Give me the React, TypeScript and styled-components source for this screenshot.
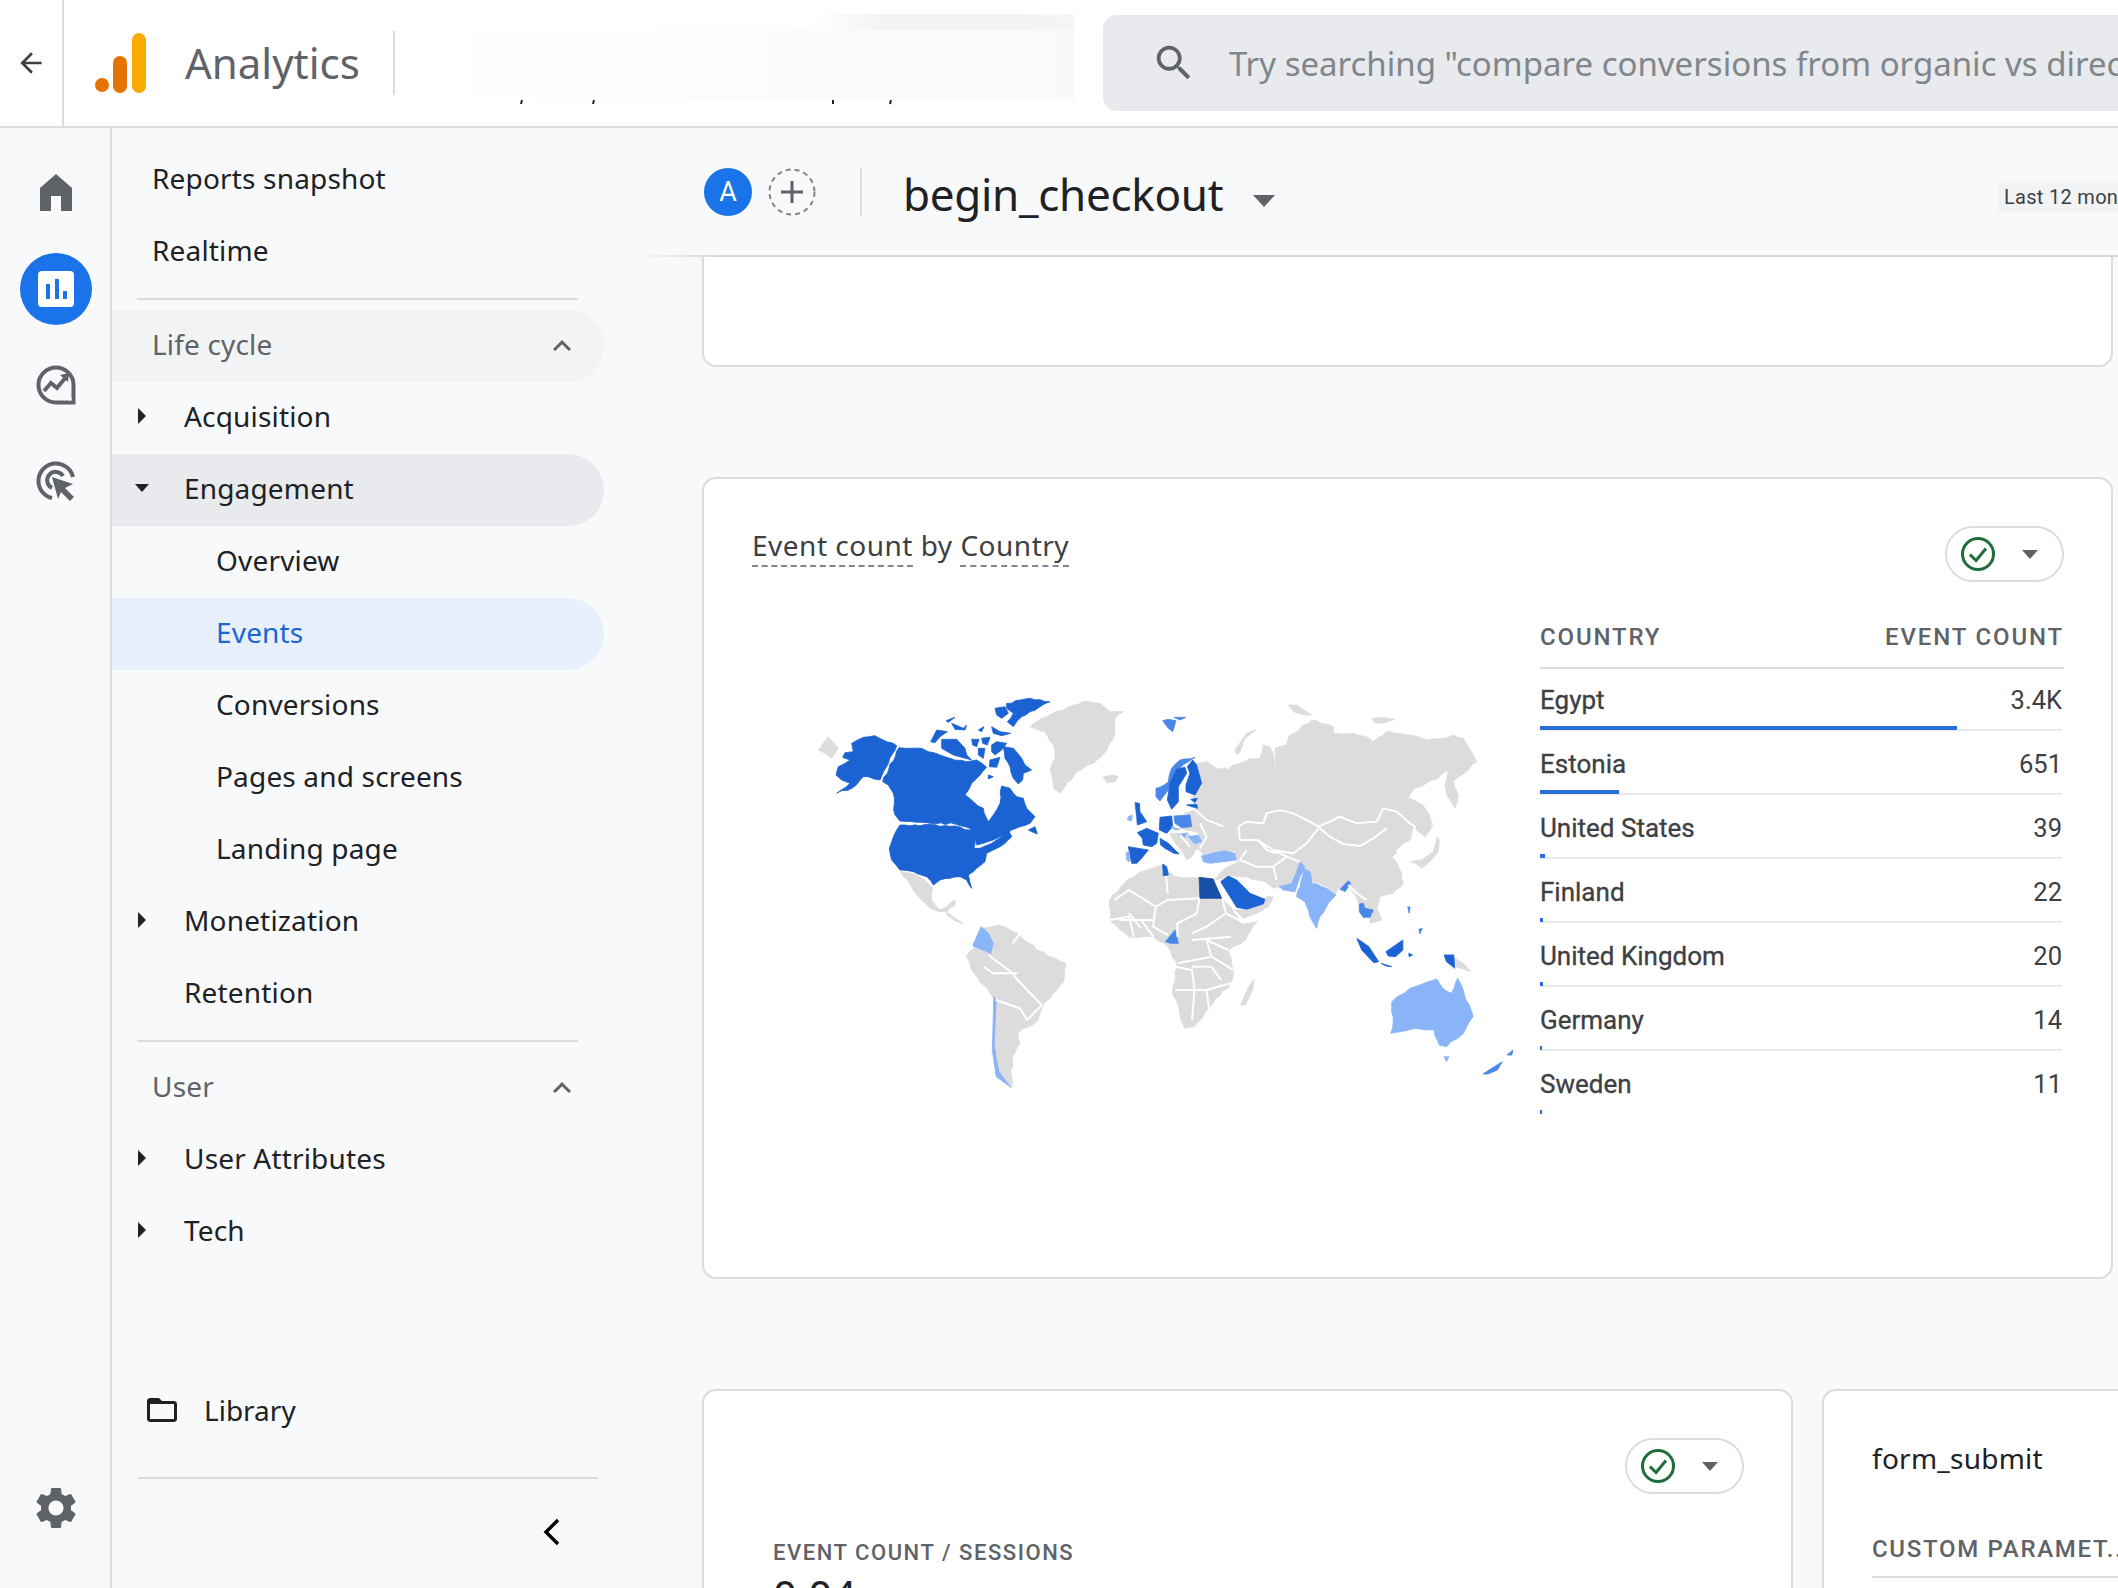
import React from 'react';
import styled, {createGlobalStyle} from 'styled-components';

const GlobalStyle = createGlobalStyle`
    html, body {
        margin: 0;
        padding: 0;
        background: #f8f9fb;
    }
    * {
        box-sizing: border-box;
    }
`

const SANS = `"Noto Sans", "Open Sans", sans-serif`
const ROBOTO = `Roboto, "Liberation Sans", sans-serif`

const Page = styled.div`
    width: 2118px;
    height: 1588px;
    overflow: hidden;
    display: flex;
    flex-direction: column;
    font-family: ${SANS};
    background: #f8f9fb;
`

/* top bar */
const TopBar = styled.header`
    height: 128px;
    flex-shrink: 0;
    display: flex;
    align-items: stretch;
    background: #fff;
    border-bottom: 2px solid #dadce0;
`
const BackCell = styled.div`
    width: 64px;
    display: flex;
    align-items: center;
    justify-content: center;
    border-right: 2px solid #dadce0;
`
const Brand = styled.div`
    display: flex;
    align-items: center;
    margin-left: 31px;
`
const BrandName = styled.span`
    margin: -2px 0 0 39px;
    font-size: 42px;
    color: #5f6368;
`
const BrandRule = styled.div`
    width: 2px;
    height: 64px;
    margin-left: 33px;
    background: #dadce0;
`
const Redacted = styled.div`
    position: relative;
    width: 662px;
    height: 86px;
    margin: 14px 0 0 17px;
    background:
        linear-gradient(90deg, #ffffff 60%, #f3f3f3 72%, #f5f5f5) top / 100% 16px no-repeat,
        linear-gradient(90deg, #ffffff, #fcfcfc 50%, #f9f9f9);
`
const Descenders = styled.svg`
    position: absolute;
    left: 0;
    top: 86px;
`
const SearchBar = styled.div`
    flex: 1;
    height: 96px;
    margin: 15px -30px 0 29px;
    padding-left: 48px;
    display: flex;
    align-items: center;
    border-radius: 14px;
    background: #e8eaed;
    overflow: hidden;
`
const SearchIcon = styled.svg`
    flex-shrink: 0;
`
const SearchText = styled.span`
    margin-left: 32px;
    font-size: 33px;
    color: #80868b;
    white-space: nowrap;
`

/* left rail */
const Body = styled.div`
    flex: 1;
    display: flex;
    min-height: 0;
`
const Rail = styled.nav`
    width: 112px;
    flex-shrink: 0;
    display: flex;
    flex-direction: column;
    align-items: center;
    padding-top: 29px;
    border-right: 2px solid #dadce0;
`
const RailSlot = styled.div`
    width: 72px;
    height: 72px;
    margin-bottom: 24px;
    margin-left: 1px;
    display: flex;
    align-items: center;
    justify-content: center;
`
const RailActive = styled(RailSlot)`
    border-radius: 50%;
    background: #1a73e8;
`
const RailBottom = styled(RailSlot)`
    margin-top: auto;
    margin-bottom: 44px;
`

/* navigation panel */
const NavPanel = styled.aside`
    width: 492px;
    flex-shrink: 0;
    display: flex;
    flex-direction: column;
    padding-top: 16px;
`
type Tone = 'plain' | 'section' | 'muted' | 'open' | 'active'
const toneBg: Record<Tone, string> = {
    plain: 'transparent',
    section: '#f1f3f4',
    muted: 'transparent',
    open: '#e8eaed',
    active: '#e8f0fe',
}
const toneText: Record<Tone, string> = {
    plain: '#202124',
    section: '#5f6368',
    muted: '#5f6368',
    open: '#202124',
    active: '#1967d2',
}
const NavRow = styled.div<{ $tone: Tone }>`
    height: 72px;
    flex-shrink: 0;
    display: flex;
    align-items: center;
    padding: 0 26px 4px 20px;
    border-radius: 0 36px 36px 0;
    font-size: 28px;
    letter-spacing: 0.17px;
    background: ${props => toneBg[props.$tone]};
    color: ${props => toneText[props.$tone]};
`
const CaretSlot = styled.div`
    width: 20px;
    display: flex;
    justify-content: center;
`
const NavLabel = styled.span<{ $depth: number }>`
    margin-left: ${props => props.$depth * 32}px;
`
const SectionChevron = styled.svg`
    margin: 4px -2px 0 auto;
`
const NavRule = styled.div<{ $top: number }>`
    height: 2px;
    flex-shrink: 0;
    margin: ${props => props.$top}px 26px 10px 25px;
    background: #dadce0;
`
const LibraryRow = styled.div`
    height: 72px;
    flex-shrink: 0;
    margin-top: 108px;
    padding: 0 0 4px 32px;
    display: flex;
    align-items: center;
    gap: 24px;
    font-size: 28px;
    color: #202124;
`
const FootRule = styled.div`
    height: 2px;
    margin: 29px 6px 0 26px;
    background: #dadce0;
`
const CollapseRow = styled.div`
    height: 106px;
    display: flex;
    align-items: center;
    justify-content: flex-end;
    padding-right: 44px;
`

/* main */
const Main = styled.main`
    flex: 1;
    min-width: 0;
    display: flex;
    flex-direction: column;
`
const ReportHeader = styled.div`
    height: 129px;
    flex-shrink: 0;
    margin-left: 30px;
    padding: 0 0 0 70px;
    display: flex;
    align-items: center;
    border-bottom: 2px solid #d4d6d9;
    border-image: linear-gradient(90deg, transparent, #d4d6d9 90px) 1;
`
const Avatar = styled.div`
    width: 48px;
    height: 48px;
    border-radius: 50%;
    display: flex;
    align-items: center;
    justify-content: center;
    background: #1a73e8;
    color: #fff;
    font: 400 27px ${ROBOTO};
`
const AddCompare = styled.svg`
    margin-left: 16px;
`
const HeaderRule = styled.div`
    width: 2px;
    height: 48px;
    margin-left: 44px;
    background: #dadce0;
`
const ReportTitle = styled.h1`
    margin: 4px 0 0 41px;
    font-size: 44px;
    font-weight: 400;
    letter-spacing: -0.3px;
    color: #202124;
`
const TitleCaret = styled.svg`
    margin: 18px 0 0 29px;
`
const DateChip = styled.div`
    width: 121px;
    height: 31px;
    margin: 10px 0 0 auto;
    padding-left: 7px;
    display: flex;
    align-items: center;
    overflow: hidden;
    white-space: nowrap;
    border-radius: 4px 0 0 4px;
    background: #f1f3f4;
    color: #3c4043;
    font: 400 20px ${ROBOTO};
    letter-spacing: 0.3px;
`
const Content = styled.div`
    flex: 1;
    padding: 0 5px 0 98px;
    display: flex;
    flex-direction: column;
    gap: 110px;
`
const Card = styled.section`
    background: #fff;
    border: 2px solid #dadce0;
    border-radius: 14px;
`
const StubCard = styled(Card)`
    height: 110px;
    border-top: none;
    border-radius: 0 0 14px 14px;
`
const MapCard = styled(Card)`
    height: 802px;
    flex-shrink: 0;
`
const MapHead = styled.div`
    display: flex;
    justify-content: space-between;
    align-items: flex-start;
    padding: 47px 47px 0 48px;
`
const MapTitle = styled.div`
    margin-top: -1px;
    font-size: 28px;
    line-height: 40px;
    letter-spacing: 0.5px;
    color: #3c4043;
`
const Dashed = styled.span`
    padding-bottom: 1px;
    border-bottom: 2px dashed #80868b;
`
const StatusPill = styled.div`
    width: 119px;
    height: 56px;
    display: flex;
    align-items: center;
    padding-left: 13px;
    gap: 24px;
    border: 2px solid #dadce0;
    border-radius: 28px;
    background: #fff;
`
const MapBody = styled.div`
    display: flex;
    margin-top: 18px;
    margin-left: 76px;
`
const WorldMap = styled.svg`
    flex-shrink: 0;
    margin-top: 80px;
`
const Table = styled.div`
    width: 524px;
    font-family: ${ROBOTO};
`
const TableHead = styled.div`
    height: 69px;
    padding: 23px 0 0;
    display: flex;
    justify-content: space-between;
    border-bottom: 2px solid #dadce0;
    font-size: 24px;
    font-weight: 500;
    line-height: 28px;
    letter-spacing: 1.85px;
    color: #5f6368;
`
const Row = styled.div`
    height: 64px;
    display: flex;
    flex-direction: column;
`
const RowText = styled.div`
    height: 57px;
    padding: 16px 2px 0 0;
    display: flex;
    justify-content: space-between;
    font-size: 25.5px;
    line-height: 30px;
    color: #3c4043;
`
const RowName = styled.span`
    font-size: 26px;
    -webkit-text-stroke: 0.3px #3c4043;
`
const Track = styled.div<{ $line: boolean }>`
    height: 5px;
    margin-right: 2px;
    border-bottom: 2px solid ${props => (props.$line ? '#e8eaed' : 'transparent')};
`
const Fill = styled.div`
    height: 4px;
    background: #2a6fd9;
`
const BottomRow = styled.div`
    display: flex;
    gap: 29px;
`
const RatioCard = styled(Card)`
    width: 1091px;
    height: 320px;
    flex-shrink: 0;
    padding: 47px 47px 0 69px;
`
const PillLine = styled.div`
    display: flex;
    justify-content: flex-end;
`
const RatioLabel = styled.div`
    margin-top: 46px;
    font: 500 22px/26px ${ROBOTO};
    letter-spacing: 1.55px;
    color: #5f6368;
`
const RatioValue = styled.div`
    margin-top: 4px;
    font-size: 42px;
    line-height: 50px;
    color: #202124;
`
const ParamCard = styled(Card)`
    width: 400px;
    height: 320px;
    flex-shrink: 0;
    padding: 47px 0 0 48px;
`
const ParamTitle = styled.div`
    font-size: 28px;
    line-height: 40px;
    letter-spacing: 0.25px;
    color: #202124;
`
const ParamHead = styled.div`
    height: 59px;
    margin-top: 41px;
    padding-top: 16px;
    white-space: nowrap;
    border-bottom: 2px solid #dadce0;
    font: 500 24px/28px ${ROBOTO};
    letter-spacing: 1.7px;
    color: #5f6368;
`

/* icons */
const Tri = ({dir, size, color}: { dir: 'right' | 'down', size: number, color: string }) => (
    <svg width={size} height={size} viewBox="0 0 20 20">
        <polygon points={dir === 'down' ? '3,6 17,6 10,14' : '6,2 14,10 6,18'} fill={color}/>
    </svg>
)

const CheckIcon = () => (
    <svg width="36" height="36" viewBox="0 0 36 36">
        <circle cx="18" cy="18" r="15.5" fill="none" stroke="#1e6e3c" strokeWidth="3"/>
        <polyline points="10,18.5 16,24.5 26,12.5" fill="none" stroke="#1e6e3c" strokeWidth="3"/>
    </svg>
)

const PillCaret = () => (
    <svg width="20" height="20" viewBox="0 0 20 20">
        <polygon points="2,6 18,6 10,15" fill="#5f6368"/>
    </svg>
)

const GaLogo = () => (
    <svg width="51" height="60" viewBox="0 0 51 60">
        <rect x="37" y="0" width="14" height="60" rx="7" fill="#f9ab00"/>
        <rect x="18" y="23" width="14" height="37" rx="7" fill="#e37400"/>
        <circle cx="7" cy="52" r="7" fill="#e37400"/>
    </svg>
)

const ReportsIcon = () => (
    <svg width="36" height="36" viewBox="0 0 36 36">
        <rect width="36" height="36" rx="4" fill="#fff"/>
        <rect x="8" y="13" width="4" height="15" fill="#1a73e8"/>
        <rect x="17" y="8" width="4" height="20" fill="#1a73e8"/>
        <rect x="25" y="20" width="4" height="8" fill="#1a73e8"/>
    </svg>
)

const navTop = [
    {label: 'Reports snapshot'},
    {label: 'Realtime'},
]
type NavItem = { label: string, depth: number, caret?: 'right' | 'down', tone?: Tone }
const lifeCycle: NavItem[] = [
    {label: 'Acquisition', depth: 1, caret: 'right'},
    {label: 'Engagement', depth: 1, caret: 'down', tone: 'open'},
    {label: 'Overview', depth: 2},
    {label: 'Events', depth: 2, tone: 'active'},
    {label: 'Conversions', depth: 2},
    {label: 'Pages and screens', depth: 2},
    {label: 'Landing page', depth: 2},
    {label: 'Monetization', depth: 1, caret: 'right'},
    {label: 'Retention', depth: 1},
]
const userItems: NavItem[] = [
    {label: 'User Attributes', depth: 1, caret: 'right'},
    {label: 'Tech', depth: 1, caret: 'right'},
]

const NavEntry = ({item}: { item: NavItem }) => (
    <NavRow $tone={item.tone || 'plain'}>
        <CaretSlot>{item.caret && <Tri dir={item.caret} size={20} color="#202124"/>}</CaretSlot>
        <NavLabel $depth={item.depth}>{item.label}</NavLabel>
    </NavRow>
)

const SectionHead = ({label}: { label: string }) => (
    <>
        <CaretSlot/>
        <NavLabel $depth={0}>{label}</NavLabel>
        <SectionChevron width="36" height="36" viewBox="0 0 24 24">
            <path d="M7.41 15.41 12 10.83l4.59 4.58L18 14l-6-6-6 6z" fill="#5f6368"/>
        </SectionChevron>
    </>
)

const countries = [
    {name: 'Egypt', value: '3.4K', bar: 417},
    {name: 'Estonia', value: '651', bar: 79},
    {name: 'United States', value: '39', bar: 5},
    {name: 'Finland', value: '22', bar: 3},
    {name: 'United Kingdom', value: '20', bar: 3},
    {name: 'Germany', value: '14', bar: 2},
    {name: 'Sweden', value: '11', bar: 2},
]

const GREY = '#dcdcdc'
const BLUE = '#1b62d2'
const DARK = '#174ea6'
const MID = '#4a86e8'
const LIGHT = '#8ab4f8'

// traced from crops of the map, each group in the coordinates of its crop
const americas: [string, string][] = [
    [GREY, '55,210 85,170 115,205 95,235 75,220'],
    [BLUE, '155,190 190,172 225,167 250,180 290,197 240,300 205,290 190,290 160,322 110,340 150,310 125,300 108,285 115,260 150,240 128,232 135,218 160,215'],
    [BLUE, '297,203 330,205 365,205 385,215 420,225 450,235 500,245 530,240 560,262 540,285 515,310 495,345 520,365 550,385 565,425 580,405 600,370 605,318 630,325 650,350 670,355 680,385 705,410 690,430 660,440 635,450 610,465 580,480 550,490 530,495 525,470 510,445 465,432 380,428 300,423 285,405 280,340 265,315 248,305'],
    [BLUE, '620,70 690,55 750,65 720,80 690,95 665,110 640,140 622,125 640,100 620,85'],
    [BLUE, '585,85 615,80 625,100 605,115 590,105'],
    [BLUE, '392,185 410,150 442,155 420,170 405,188'],
    [BLUE, '425,178 470,178 495,205 500,225 515,240 460,225 425,205'],
    [BLUE, '438,122 465,112 445,127'],
    [BLUE, '455,130 490,145 500,135 495,150 465,148'],
    [BLUE, '515,178 537,178 530,200 518,195'],
    [BLUE, '545,175 570,172 562,195 548,190'],
    [BLUE, '575,195 590,185 620,190 605,210 585,225 575,215'],
    [BLUE, '610,200 640,205 665,235 675,255 695,270 670,280 668,300 655,312 640,295 630,260 615,235'],
    [BLUE, '575,140 600,155 632,160 605,167 580,160'],
    [BLUE, '570,240 600,232 590,262 568,260'],
    [BLUE, '535,150 552,140 545,155'],
    [BLUE, '535,205 555,205 550,235 535,225'],
    [BLUE, '565,285 580,290 565,297'],
    [BLUE, '300,435 465,438 510,450 525,470 522,505 540,505 575,490 605,470 625,450 635,470 625,480 600,500 580,510 560,520 555,545 530,565 505,585 515,625 500,600 480,590 450,595 420,600 400,615 380,590 340,575 300,570 275,540 268,505 280,470 290,450'],
    [BLUE, '685,450 705,440 712,462 695,455'],
    [GREY, '300,575 340,580 375,600 398,625 395,660 420,690 440,680 465,660 465,675 440,695 420,695 390,685 360,655 335,620'],
    [GREY, '440,695 465,715 490,730 470,725 440,705'],
    [GREY, '690,140 740,110 790,90 850,65 900,70 930,95 970,95 945,115 945,160 920,210 880,250 830,275 795,320 780,340 760,325 750,270 765,235 760,195 735,155'],
    [GREY, '910,290 940,285 955,290 945,305 920,308'],
]

const eurasia: [string, string][] = [
    [GREY, '290,250 320,245 355,268 375,262 380,270 400,255 450,235 480,235 490,195 510,200 530,265 525,205 560,195 570,165 635,120 700,140 700,160 760,160 800,170 820,185 860,155 930,165 980,180 1030,175 1060,165 1090,175 1115,215 1130,245 1085,285 1060,305 1075,345 1065,385 1040,345 1035,315 1045,270 1020,290 980,310 945,325 925,355 965,375 985,400 995,440 975,470 940,440 935,475 900,500 870,525 885,540 905,580 910,610 880,640 840,650 830,685 845,720 810,730 810,712 780,690 775,665 760,640 745,615 715,625 708,640 680,620 635,605 630,575 610,560 600,545 590,575 575,610 535,620 520,625 495,605 470,600 440,590 410,590 385,585 370,595 345,600 360,580 375,565 415,545 405,515 375,510 340,515 310,525 300,510 275,505 265,495 305,485 295,460 240,445 275,440 270,405 250,400 285,390 295,372 278,350 305,320 305,310'],
    [GREY, '210,460 265,460 295,495 275,530 260,540 245,510 225,490'],
    [GREY, '405,690 440,690 490,675 500,650 520,650 505,680 470,700 430,715'],
    [GREY, '405,210 440,160 470,148 435,175 420,215 410,225'],
    [GREY, '565,75 590,75 635,105 610,105 580,95'],
    [GREY, '815,115 850,112 885,118 850,130 825,128'],
    [GREY, '930,545 965,540 1000,515 1012,470 1018,480 1015,515 990,545 965,565 945,550'],
    [GREY, '965,370 985,400 1000,440 990,420 970,390'],
    [GREY, '865,510 885,500 890,520 875,530'],
    [MID, '188,122 205,118 228,122 218,155 205,145'],
    [MID, '222,112 258,112 240,120'],
    [MID, '168,325 205,305 215,265 240,240 285,232 265,245 240,265 225,290 205,330 180,363 168,350'],
    [BLUE, '230,268 255,262 260,280 235,320 235,365 215,388 202,360 210,310'],
    [BLUE, '262,260 278,240 290,255 305,310 285,345 258,335 258,315 270,280'],
    [BLUE, '272,358 292,355 285,368'],
    [BLUE, '260,375 290,372 293,385 275,380'],
    [BLUE, '105,368 118,370 120,395 140,425 112,435 110,410'],
    [LIGHT, '85,410 97,405 95,422 82,420'],
    [BLUE, '112,458 140,445 175,460 170,490 155,500 130,495 127,475'],
    [BLUE, '180,412 215,408 218,440 200,460 178,450'],
    [MID, '222,408 270,405 275,440 245,443 225,430'],
    [BLUE, '85,500 145,510 125,535 110,550 95,550'],
    [LIGHT, '78,518 88,515 88,545 80,540'],
    [BLUE, '180,475 205,490 237,522 222,520 195,505 182,495'],
    [LIGHT, '265,470 295,465 305,485 285,492'],
    [LIGHT, '212,440 240,448 225,450'],
    [LIGHT, '235,465 262,458 255,472'],
    [BLUE, '188,552 200,560 205,585 190,587'],
    [LIGHT, '305,528 340,518 375,512 405,520 410,540 370,545 330,550 310,545'],
    [DARK, '297,592 340,597 345,610 365,655 300,655'],
    [BLUE, '362,605 385,588 410,600 450,640 495,658 490,672 440,688 410,682 390,650'],
    [LIGHT, '537,620 575,610 590,575 600,545 615,560 600,590 590,620 585,635 550,630'],
    [LIGHT, '610,565 630,575 635,610 680,625 708,645 680,680 660,710 650,745 635,720 615,665 590,650 600,620'],
    [MID, '720,628 745,602 752,610 735,635 730,632'],
    [MID, '778,672 790,670 795,685 820,690 810,712 790,712 778,695'],
]

const eurasiaLines = [
    '415,440 440,425 490,430 500,400 540,390 580,400 620,420 655,440',
    '655,440 690,425 720,410 770,430 830,425 850,385 890,395 930,430 945,440 935,475',
    '655,440 690,470 730,492 780,498 820,475 860,445',
    '415,440 420,480 470,480 520,510 580,520 620,490 655,445',
    '475,480 500,510 530,520',
    '520,510 560,530 520,560 530,600',
    '560,530 600,545',
    '285,390 320,420 370,440',
    '300,430 320,470 300,505',
    '745,615 770,640 800,660',
    '440,510 420,540 470,560 520,560',
    '240,465 270,500',
]

const southern: [string, string][] = [
    [GREY, '740,578 790,555 815,590 865,595 865,655 912,655 935,695 950,730 985,725 960,780 925,810 935,870 930,910 885,985 855,1040 835,1045 825,1000 810,930 820,860 800,800 770,770 720,770 680,720 680,660 710,610'],
    [MID, '795,785 815,750 822,790 805,790'],
    [GREY, '950,975 965,925 978,898 975,930 960,975'],
    [GREY, '415,745 450,735 490,760 530,810 590,850 585,905 545,970 530,1025 490,1060 495,1090 480,1130 478,1190 478,1225 450,1190 440,1100 445,960 400,880 385,830 400,805 435,820'],
    [LIGHT, '398,795 415,740 430,760 440,790 435,820 400,800'],
    [LIGHT, '441,950 446,960 442,1090 446,1135 452,1175 476,1222 470,1215 446,1190 438,1110'],
    [LIGHT, '1262,965 1300,925 1320,915 1355,897 1365,920 1385,940 1398,895 1415,960 1430,1010 1410,1060 1375,1100 1360,1095 1350,1050 1310,1045 1260,1060 1265,1010'],
    [LIGHT, '1370,1130 1380,1130 1375,1145'],
    [MID, '1450,1182 1490,1145 1480,1170 1460,1182'],
    [MID, '1500,1125 1512,1110 1510,1125'],
    [BLUE, '1190,775 1215,800 1235,845 1225,848 1200,810'],
    [BLUE, '1250,815 1270,795 1285,780 1285,810 1270,830 1255,828'],
    [BLUE, '1240,850 1262,860 1250,858'],
    [GREY, '1392,835 1410,850 1425,875 1395,860'],
    [BLUE, '1370,825 1390,825 1392,865 1375,845'],
    [BLUE, '1297,820 1305,825 1298,830'],
    [MID, '1295,680 1300,682 1298,700'],
    [MID, '1318,748 1325,745 1320,762'],
]

const southernLines = [
    '690,660 720,630 775,680 800,660 865,655',
    '795,570 800,640',
    '865,655 860,700 820,730 820,770',
    '775,680 770,740 800,765',
    '700,720 770,720',
    '912,655 920,700 880,740 850,760',
    '850,780 930,770',
    '880,780 890,830 820,850',
    '890,830 935,870',
    '815,930 880,930 885,985',
    '855,930 850,1020',
    '880,930 930,910',
    '680,720 720,710 730,770',
    '720,700 745,745',
    '745,720 770,770',
    '920,700 960,730',
    '925,810 880,780',
    '850,860 890,860',
    '815,860 850,870 855,930',
    '890,860 910,900',
    '430,825 480,880 490,900 540,975 510,1020',
    '445,960 495,985 510,1020',
    '490,880 440,880 420,860',
    '480,790 495,760',
]

// the traced outlines are coarse, so break long edges up a little to get a coastline
const roughen = (points: string) => {
    const pts = points.split(' ').map(p => p.split(',').map(Number))
    if (pts.length < 10) return points
    const out: string[] = []
    pts.forEach(([x, y], i) => {
        const [nx, ny] = pts[(i + 1) % pts.length]
        const len = Math.hypot(nx - x, ny - y)
        const steps = Math.floor(len / 14)
        out.push(`${x},${y}`)
        for (let s = 1; s < steps; s++) {
            const seed = Math.sin((x + s) * 12.9898 + (y + s) * 78.233) * 43758.5453
            const off = (seed - Math.floor(seed) - 0.5) * 6
            const t = s / steps
            out.push(`${x + (nx - x) * t - (ny - y) / len * off},${y + (ny - y) * t + (nx - x) / len * off}`)
        }
    })
    return out.join(' ')
}

const Shapes = ({shapes}: { shapes: [string, string][] }) => (
    <>
        {shapes.map(([fill, points], i) => (
            <polygon key={i} fill={fill} points={roughen(points)} stroke={fill} strokeWidth="0.8"
                     strokeLinejoin="round" vectorEffect="non-scaling-stroke"/>
        ))}
    </>
)

const Borders = ({lines}: { lines: string[] }) => (
    <>
        {lines.map((points, i) => (
            <polyline key={i} points={points} fill="none" stroke="#fff" strokeWidth="2" vectorEffect="non-scaling-stroke"/>
        ))}
    </>
)

const App = () => {
    return (
        <Page>
            <GlobalStyle/>
            <TopBar>
                <BackCell>
                    <svg width="32" height="32" viewBox="0 0 24 24">
                        <path d="M20 11H7.83l5.59-5.59L12 4l-8 8 8 8 1.41-1.41L7.83 13H20v-2z" fill="#3c4043"/>
                    </svg>
                </BackCell>
                <Brand>
                    <GaLogo/>
                    <BrandName>Analytics</BrandName>
                    <BrandRule/>
                </Brand>
                <Redacted>
                    <Descenders width="662" height="6" viewBox="0 0 662 6">
                        <path d="M110 0l-1 4M182 0l-1 4M421 0v4M479 0l-1 4" stroke="#202124" strokeWidth="2"/>
                    </Descenders>
                </Redacted>
                <SearchBar>
                    <SearchIcon width="46" height="46" viewBox="0 0 24 24">
                        <path d="M15.5 14h-.79l-.28-.27C15.41 12.59 16 11.11 16 9.5 16 5.91 13.09 3 9.5 3S3 5.91 3 9.5 5.91 16 9.5 16c1.61 0 3.09-.59 4.23-1.57l.27.28v.79l5 4.99L20.49 19l-4.99-5zm-6 0C7.01 14 5 11.99 5 9.5S7.01 5 9.5 5 14 7.01 14 9.5 11.99 14 9.5 14z" fill="#5f6368"/>
                    </SearchIcon>
                    <SearchText>Try searching "compare conversions from organic vs direct"</SearchText>
                </SearchBar>
            </TopBar>
            <Body>
                <Rail>
                    <RailSlot>
                        <svg width="40" height="44" viewBox="0 0 20 22">
                            <path d="M10 1.5L18 8.5V20H12.5V12.5H7.5V20H2V8.5Z" fill="#5f6368"/>
                        </svg>
                    </RailSlot>
                    <RailActive><ReportsIcon/></RailActive>
                    <RailSlot>
                        <svg width="42" height="42" viewBox="0 0 42 42">
                            <path d="M21 3.5A17.5 17.5 0 1 0 21 38.5H38.5V21A17.5 17.5 0 0 0 21 3.5Z" fill="none" stroke="#5f6368" strokeWidth="4"/>
                            <polyline points="9,27 16,19 22,24 31,13" fill="none" stroke="#5f6368" strokeWidth="4"/>
                            <polygon points="25,11 34,9 33,18" fill="#5f6368"/>
                            <circle cx="35" cy="35" r="1.8" fill="#f8f9fb"/>
                        </svg>
                    </RailSlot>
                    <RailSlot>
                        <svg width="42" height="42" viewBox="0 0 42 42">
                            <path d="M17 38A17.5 17.5 0 1 1 38 17" fill="none" stroke="#5f6368" strokeWidth="4"/>
                            <path d="M17 28A8.5 8.5 0 1 1 28 16" fill="none" stroke="#5f6368" strokeWidth="4"/>
                            <polygon points="17,17 38,24 30,28 39,37 35,41 26,32 23,39" fill="#5f6368"/>
                        </svg>
                    </RailSlot>
                    <RailBottom>
                        <svg width="50" height="50" viewBox="0 0 24 24">
                            <path d="M19.14 12.94c.04-.3.06-.61.06-.94 0-.32-.02-.64-.07-.94l2.03-1.58c.18-.14.23-.41.12-.61l-1.92-3.32c-.12-.22-.37-.29-.59-.22l-2.39.96c-.5-.38-1.03-.7-1.62-.94l-.36-2.54c-.04-.24-.24-.41-.48-.41h-3.84c-.24 0-.43.17-.47.41l-.36 2.54c-.59.24-1.13.57-1.62.94l-2.39-.96c-.22-.08-.47 0-.59.22L2.74 8.87c-.12.21-.08.47.12.61l2.03 1.58c-.05.3-.09.63-.09.94s.02.64.07.94l-2.03 1.58c-.18.14-.23.41-.12.61l1.92 3.32c.12.22.37.29.59.22l2.39-.96c.5.38 1.03.7 1.62.94l.36 2.54c.05.24.24.41.48.41h3.84c.24 0 .44-.17.47-.41l.36-2.54c.59-.24 1.13-.56 1.62-.94l2.39.96c.22.08.47 0 .59-.22l1.92-3.32c.12-.22.07-.47-.12-.61l-2.01-1.58zM12 15.6c-1.98 0-3.6-1.62-3.6-3.6s1.62-3.6 3.6-3.6 3.6 1.62 3.6 3.6-1.62 3.6-3.6 3.6z" fill="#5f6368"/>
                        </svg>
                    </RailBottom>
                </Rail>
                <NavPanel>
                    {navTop.map(item => (
                        <NavRow key={item.label} $tone="plain">
                            <CaretSlot/>
                            <NavLabel $depth={0}>{item.label}</NavLabel>
                        </NavRow>
                    ))}
                    <NavRule $top={10}/>
                    <NavRow $tone="section"><SectionHead label="Life cycle"/></NavRow>
                    {lifeCycle.map(item => <NavEntry key={item.label} item={item}/>)}
                    <NavRule $top={10}/>
                    <NavRow $tone="muted">
                        <SectionHead label="User"/>
                    </NavRow>
                    {userItems.map(item => <NavEntry key={item.label} item={item}/>)}
                    <LibraryRow>
                        <svg width="36" height="36" viewBox="0 0 24 24">
                            <path d="M20 6h-8l-2-2H4c-1.1 0-1.99.9-1.99 2L2 18c0 1.1.9 2 2 2h16c1.1 0 2-.9 2-2V8c0-1.1-.9-2-2-2zm0 12H4V8h16v10z" fill="#202124"/>
                        </svg>
                        Library
                    </LibraryRow>
                    <FootRule/>
                    <CollapseRow>
                        <svg width="17" height="28" viewBox="0 0 17 28">
                            <polyline points="15,2 3,14 15,26" fill="none" stroke="#000" strokeWidth="3.4"/>
                        </svg>
                    </CollapseRow>
                </NavPanel>
                <Main>
                    <ReportHeader>
                        <Avatar>A</Avatar>
                        <AddCompare width="48" height="48" viewBox="0 0 48 48">
                            <circle cx="24" cy="24" r="22.5" fill="none" stroke="#80868b" strokeWidth="2" strokeDasharray="5 4"/>
                            <path d="M24 13v22M13 24h22" stroke="#5f6368" strokeWidth="3"/>
                        </AddCompare>
                        <HeaderRule/>
                        <ReportTitle>begin_checkout</ReportTitle>
                        <TitleCaret width="24" height="14" viewBox="0 0 24 14">
                            <polygon points="1,1 23,1 12,13" fill="#5f6368"/>
                        </TitleCaret>
                        <DateChip>Last 12 months</DateChip>
                    </ReportHeader>
                    <Content>
                        <StubCard/>
                        <MapCard>
                            <MapHead>
                                <MapTitle>
                                    <Dashed>Event count</Dashed> by <Dashed>Country</Dashed>
                                </MapTitle>
                                <StatusPill>
                                    <CheckIcon/>
                                    <PillCaret/>
                                </StatusPill>
                            </MapHead>
                            <MapBody>
                                <WorldMap width="760" height="440" viewBox="780 680 760 440">
                                    <g transform="translate(800 680) scale(0.33333)">
                                        <Shapes shapes={americas}/>
                                    </g>
                                    <g transform="translate(780 680) scale(0.48473 0.33333)">
                                        <Shapes shapes={southern}/>
                                        <Borders lines={southernLines}/>
                                    </g>
                                    <g transform="translate(1100 680) scale(0.33333)">
                                        <Shapes shapes={eurasia}/>
                                        <Borders lines={eurasiaLines}/>
                                    </g>
                                </WorldMap>
                                <Table>
                                    <TableHead>
                                        <span>COUNTRY</span>
                                        <span>EVENT COUNT</span>
                                    </TableHead>
                                    {countries.map((c, i) => (
                                        <Row key={c.name}>
                                            <RowText>
                                                <RowName>{c.name}</RowName>
                                                <span>{c.value}</span>
                                            </RowText>
                                            <Track $line={i < countries.length - 1}>
                                                <Fill style={{width: c.bar}}/>
                                            </Track>
                                        </Row>
                                    ))}
                                </Table>
                            </MapBody>
                        </MapCard>
                        <BottomRow>
                            <RatioCard>
                                <PillLine>
                                    <StatusPill>
                                        <CheckIcon/>
                                        <PillCaret/>
                                    </StatusPill>
                                </PillLine>
                                <RatioLabel>EVENT COUNT / SESSIONS</RatioLabel>
                                <RatioValue>0.04</RatioValue>
                            </RatioCard>
                            <ParamCard>
                                <ParamTitle>form_submit</ParamTitle>
                                <ParamHead>CUSTOM PARAMET...</ParamHead>
                            </ParamCard>
                        </BottomRow>
                    </Content>
                </Main>
            </Body>
        </Page>
    );
};

export default App;
